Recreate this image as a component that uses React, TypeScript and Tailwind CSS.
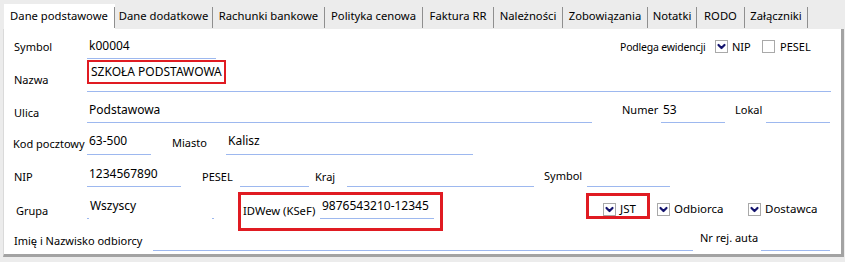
import React from 'react';

// Karta kontrahenta – zakładka "Dane podstawowe"
const TABS = [
  { label: 'Dane podstawowe', w: 'w-[111px]' },
  { label: 'Dane dodatkowe', w: 'w-[98px]' },
  { label: 'Rachunki bankowe', w: 'w-[112px]' },
  { label: 'Polityka cenowa', w: 'w-[98px]' },
  { label: 'Faktura RR', w: 'w-[71px]' },
  { label: 'Należności', w: 'w-[69px]' },
  { label: 'Zobowiązania', w: 'w-[85px]' },
  { label: 'Notatki', w: 'w-[49px]' },
  { label: 'RODO', w: 'w-[48px]' },
  { label: 'Załączniki', w: 'w-[63px]' },
];

const Check = ({ checked }: { checked: boolean }) => (
  <span className="w-[13px] h-[13px] shrink-0 border border-[#a9a9a9] bg-white flex items-center justify-center">
    {checked && (
      <svg width="11" height="11" viewBox="0 0 11 11">
        <polyline points="2.5,4 5.5,7 8.5,4" fill="none" stroke="#14146e" strokeWidth="2.2" strokeLinecap="round" strokeLinejoin="round" />
      </svg>
    )}
  </span>
);

const Field = ({ className = '', value = '' }: { className?: string; value?: string }) => (
  <div className={`shrink-0 border-b border-[#9db8ef] pl-[2px] text-[12px] leading-[16px] text-black whitespace-nowrap ${className}`}>
    {value}
  </div>
);

export default function App() {
  return (
    <div className="w-[845px] h-[262px] bg-[#ececec] text-black" style={{ fontFamily: '"Noto Sans", "Open Sans", sans-serif' }}>
      {/* Tab strip */}
      <div className="flex h-[29px] pl-[4px] pt-[4px]">
        {TABS.map((t, i) => (
          <div
            key={t.label}
            className={
              i === 0
                ? `${t.w} h-[25px] bg-white flex items-center justify-center text-[11.25px] text-black`
                : `${t.w} h-[25px] flex items-center justify-center text-[11.25px] text-black`
            }
          >
            <span className="flex-1 text-center whitespace-nowrap">{t.label}</span>
            <span className="w-px h-[21px] bg-[#8f8f8f] self-end mb-[1px]" />
          </div>
        ))}
      </div>

      {/* Panel */}
      <div className="ml-[3px] w-[841px] h-[228px] bg-white border-l border-[#dadada] border-r-[3px] border-r-[#a3a3a3] border-b-[3px] border-b-[#a3a3a3] text-[11px] whitespace-nowrap">
        {/* Symbol */}
        <div className="flex items-end h-[30px] pl-[10px]">
          <span className="w-[73px] mb-[4px] leading-[16px]">Symbol</span>
          <Field className="w-[129px] h-[21px]" value="k00004" />
          <span className="w-[404px]" />
          <span className="w-[95px] mb-[4px] leading-[16px] text-[10.5px] tracking-[-0.2px]">Podlega ewidencji</span>
          <span className="mb-[6px]"><Check checked /></span>
          <span className="w-[30px] ml-[4px] mb-[4px] leading-[16px]">NIP</span>
          <span className="mb-[6px]"><Check checked={false} /></span>
          <span className="ml-[5px] mb-[4px] leading-[16px]">PESEL</span>
        </div>

        {/* Nazwa */}
        <div className="flex items-end h-[33px] pl-[10px]">
          <span className="w-[73px] mb-[4px] leading-[16px]">Nazwa</span>
          <div className="relative w-[744px] h-[33px] border-b border-[#9db8ef] pl-[4px] pt-[5px] text-[12px] leading-[16px]">
            SZKOŁA PODSTAWOWA
            <div className="absolute left-0 top-[1px] w-[139px] h-[24px] border-2 border-[#e01b22]" />
          </div>
        </div>

        {/* Ulica */}
        <div className="flex items-end h-[31px] pl-[10px]">
          <span className="w-[73px] mb-[2px] leading-[16px]">Ulica</span>
          <Field className="w-[505px] h-[21px]" value="Podstawowa" />
          <span className="w-[30px]" />
          <span className="w-[39px] mb-[5px] leading-[16px]">Numer</span>
          <Field className="w-[64px] h-[21px]" value="53" />
          <span className="w-[10px]" />
          <span className="w-[31px] mb-[5px] leading-[16px]">Lokal</span>
          <Field className="w-[64px] h-[21px]" />
        </div>

        {/* Kod pocztowy / Miasto */}
        <div className="flex items-end h-[32px] pl-[9px]">
          <span className="w-[74px] mb-[3px] leading-[16px]">Kod pocztowy</span>
          <Field className="w-[64px] h-[22px]" value="63-500" />
          <span className="w-[21px]" />
          <span className="w-[54px] mb-[4px] leading-[16px]">Miasto</span>
          <Field className="w-[247px] h-[22px]" value="Kalisz" />
        </div>

        {/* NIP / PESEL / Kraj / Symbol */}
        <div className="flex items-end h-[32px] pl-[10px]">
          <span className="w-[73px] mb-[2px] leading-[16px]">NIP</span>
          <Field className="w-[94px] h-[21px]" value="1234567890" />
          <span className="w-[21px]" />
          <span className="w-[38px] mb-[2px] leading-[16px]">PESEL</span>
          <Field className="w-[69px] h-[21px]" />
          <span className="w-[6px]" />
          <span className="w-[32px] mb-[2px] leading-[16px]">Kraj</span>
          <Field className="w-[187px] h-[21px]" />
          <span className="w-[10px]" />
          <span className="w-[43px] mb-[3px] leading-[16px]">Symbol</span>
          <Field className="w-[83px] h-[21px]" />
        </div>

        {/* Grupa / IDWew / JST */}
        <div className="flex items-end h-[32px] pl-[12px]">
          <span className="w-[71px] mb-0 leading-[16px]">Grupa</span>
          <div className="relative w-[127px] h-[21px] pl-[3px] text-[12px] leading-[16px]">
            Wszyscy
            <span className="absolute left-0 bottom-0 w-[2px] h-px bg-[#9db8ef]" />
            <span className="absolute right-0 bottom-0 w-[2px] h-px bg-[#9db8ef]" />
          </div>
          <span className="w-[24px]" />
          <div className="relative flex items-end self-stretch w-[205px] pl-[5px]">
            <span className="w-[77px] mb-0 leading-[16px] text-[11.25px]">IDWew (KSeF)</span>
            <Field className="w-[114px] h-[21px]" value="9876543210-12345" />
            <div className="absolute left-0 top-[5px] w-[205px] h-[39px] border-[3px] border-[#e01b22]" />
          </div>
          <span className="w-[143px]" />
          <div className="relative flex items-end self-stretch w-[64px] pl-[17px]">
            <span className="mb-[3px]"><Check checked /></span>
            <span className="ml-[4px] mb-[2px] leading-[16px] text-[11.5px]">JST</span>
            <div className="absolute left-0 top-[6px] w-[64px] h-[26px] border-[3px] border-[#e01b22]" />
          </div>
          <span className="w-[7px]" />
          <span className="mb-[3px]"><Check checked /></span>
          <span className="w-[74px] ml-[4px] mb-[2px] leading-[16px] text-[11.5px]">Odbiorca</span>
          <span className="mb-[3px]"><Check checked /></span>
          <span className="ml-[4px] mb-[2px] leading-[16px] text-[11.5px]">Dostawca</span>
        </div>

        {/* Imię i Nazwisko odbiorcy / Nr rej. auta */}
        <div className="flex items-end h-[32px] pl-[10px]">
          <span className="w-[139px] mb-[2px] leading-[16px]">Imię i Nazwisko odbiorcy</span>
          <Field className="w-[540px] h-[21px]" />
          <span className="w-[7px]" />
          <span className="w-[61px] mb-[5px] leading-[16px]">Nr rej. auta</span>
          <Field className="w-[69px] h-[21px]" />
        </div>
      </div>
    </div>
  );
}
